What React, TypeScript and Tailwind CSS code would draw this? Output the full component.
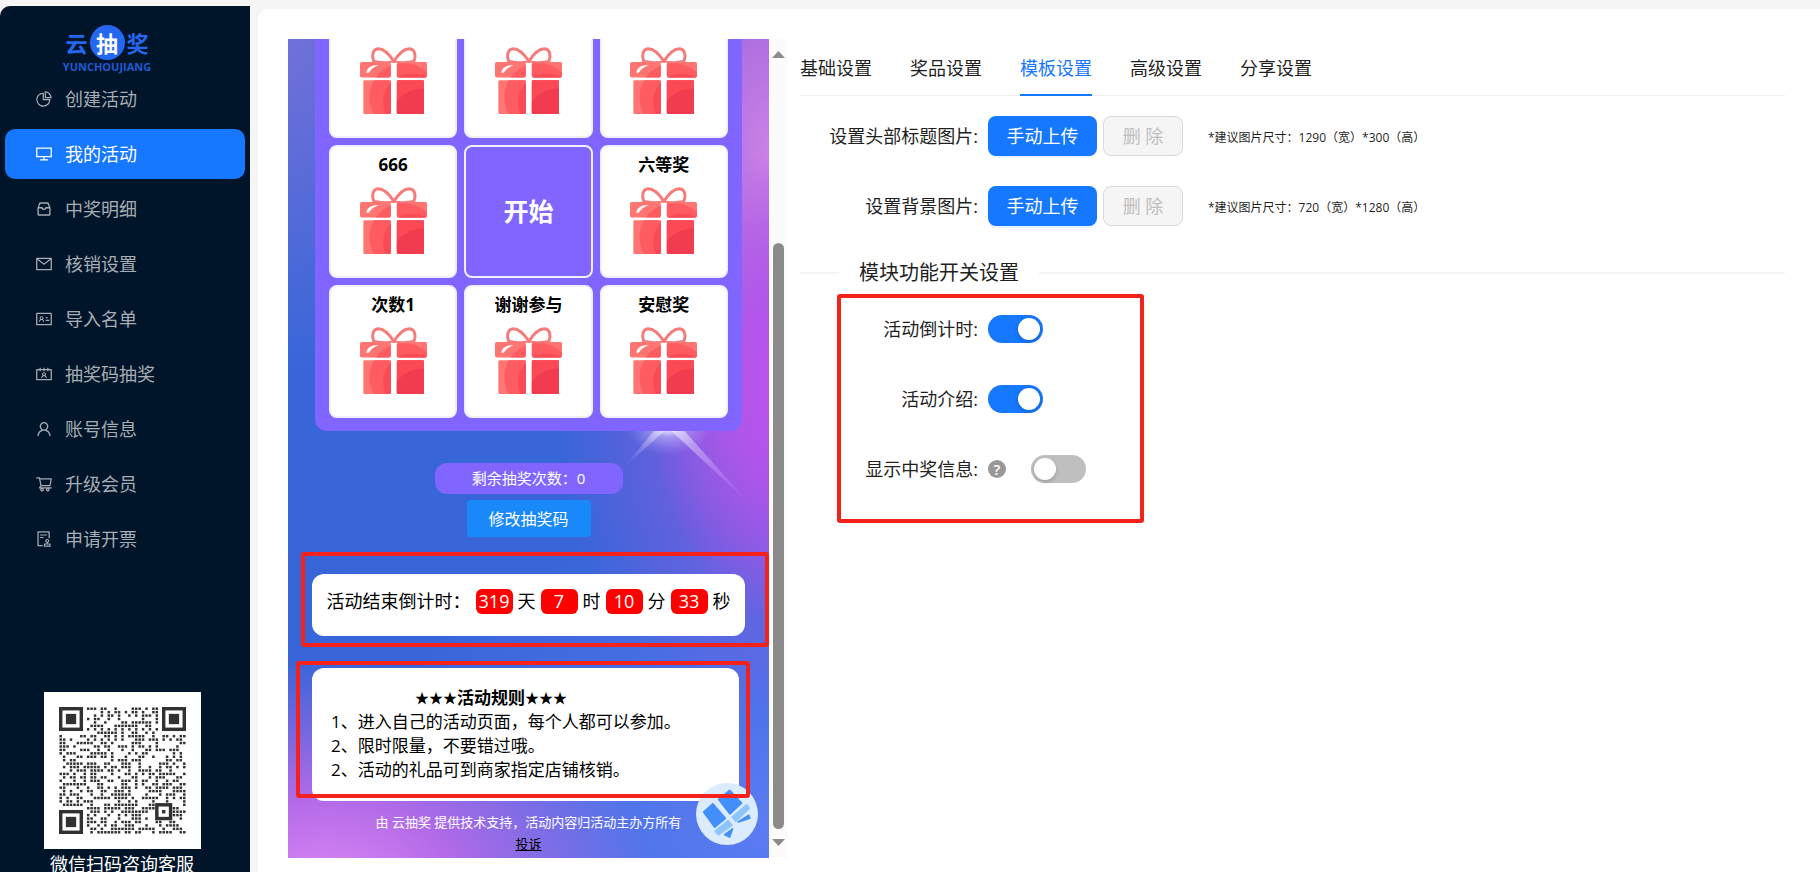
import React, { useState } from "react";
import type { IconType } from "react-icons";
import {
  AiOutlineAudit,
  AiOutlineContacts,
  AiOutlineDesktop,
  AiOutlineIdcard,
  AiOutlineInbox,
  AiOutlineMail,
  AiOutlinePieChart,
  AiOutlineShoppingCart,
  AiOutlineUser,
} from "react-icons/ai";

interface MenuItem {
  label: string;
  icon: IconType;
  active?: boolean;
}

const menuItems: MenuItem[] = [
  { label: "创建活动", icon: AiOutlinePieChart },
  { label: "我的活动", icon: AiOutlineDesktop, active: true },
  { label: "中奖明细", icon: AiOutlineInbox },
  { label: "核销设置", icon: AiOutlineMail },
  { label: "导入名单", icon: AiOutlineIdcard },
  { label: "抽奖码抽奖", icon: AiOutlineContacts },
  { label: "账号信息", icon: AiOutlineUser },
  { label: "升级会员", icon: AiOutlineShoppingCart },
  { label: "申请开票", icon: AiOutlineAudit },
];

const tabs = ["基础设置", "奖品设置", "模板设置", "高级设置", "分享设置"];

// null is the start button in the middle of the grid
const prizes: (string | null)[] = ["", "", "", "666", null, "六等奖", "次数1", "谢谢参与", "安慰奖"];

const countdown = [
  { value: 319, unit: "天" },
  { value: 7, unit: "时" },
  { value: 10, unit: "分" },
  { value: 33, unit: "秒" },
];

const rules = [
  "1、进入自己的活动页面，每个人都可以参加。",
  "2、限时限量，不要错过哦。",
  "2、活动的礼品可到商家指定店铺核销。",
];

const QR_SIZE = 37;

function isQrDot(x: number, y: number) {
  const inFinder =
    (x < 8 && y < 8) || (x > QR_SIZE - 9 && y < 8) || (x < 8 && y > QR_SIZE - 9);
  const inAlign = x >= 28 && x <= 32 && y >= 28 && y <= 32;
  if (inFinder || inAlign) return false;
  if (x === 6 || y === 6) return (x + y) % 2 === 0;
  const n = Math.sin(x * 127.1 + y * 311.7) * 43758.5453;
  return n - Math.floor(n) < 0.5;
}

function QrCode() {
  const dots: React.ReactNode[] = [];
  for (let y = 0; y < QR_SIZE; y++) {
    for (let x = 0; x < QR_SIZE; x++) {
      if (isQrDot(x, y)) {
        dots.push(<rect key={`${x}-${y}`} x={x + 0.14} y={y + 0.14} width="0.72" height="0.72" />);
      }
    }
  }
  const finders = [
    [0, 0],
    [30, 0],
    [0, 30],
  ];
  return (
    <svg viewBox="0 0 37 37" className="size-[127px]" fill="#303133" aria-hidden="true">
      {dots}
      {finders.map(([x, y]) => (
        <g key={`${x}${y}`}>
          <rect x={x + 0.5} y={y + 0.5} width="6" height="6" fill="none" stroke="#303133" />
          <rect x={x + 2} y={y + 2} width="3" height="3" />
        </g>
      ))}
      <rect x="28.5" y="28.5" width="4" height="4" fill="none" stroke="#303133" />
      <rect x="30" y="30" width="1" height="1" />
    </svg>
  );
}

function GiftIcon({ id }: { id: string }) {
  return (
    <svg viewBox="0 0 200 200" className="size-[67px]" aria-hidden="true">
      <defs>
        <clipPath id={id}>
          <rect x="0" y="45" width="92" height="46" rx="5" />
          <rect x="110" y="45" width="90" height="46" rx="5" />
          <rect x="10" y="99" width="82" height="101" rx="4" />
          <rect x="110" y="99" width="81" height="101" rx="4" />
        </clipPath>
      </defs>
      <g clipPath={`url(#${id})`}>
        <rect width="200" height="200" fill="#ff7572" />
        <circle cx="130" cy="150" r="102" fill="#ff5c62" />
        <circle cx="155" cy="165" r="86" fill="#fb4a56" />
        <circle cx="190" cy="225" r="102" fill="#f13b4f" />
        <path d="M110 45h90v25c-12-9-30-20-48-25z" fill="#ff7572" opacity="0.6" />
      </g>
      <path d="M19 77C20 62 36 53 56 54 43 59 33 66 26 77z" fill="#fff" />
      <g fill="none" stroke="#f47c7b" strokeWidth="9" strokeLinecap="round">
        <path d="M101 43C88 22 70 5 54 5 38 6 34 26 41 42" />
        <path d="M41 42C62 46 84 46 101 43" strokeWidth="6" />
        <path d="M101 43C114 22 132 5 148 5 164 6 168 26 161 42" />
        <path d="M161 42C140 46 118 46 101 43" strokeWidth="6" />
      </g>
    </svg>
  );
}

function FloatingGift() {
  return (
    <svg viewBox="0 0 188 188" className="size-[62px]" aria-hidden="true">
      <circle cx="94" cy="94" r="94" fill="#dcecff" />
      <g strokeLinejoin="round" strokeWidth="5">
        <g fill="#438ffa" stroke="#438ffa">
          <path d="M23 88 51 63 89 107 57 134z" />
          <path d="M69 50 102 22 138 61 103 94z" />
          <path d="M87 157 111 139 102 164z" />
          <path d="M128 118 160 98 163 107z" />
        </g>
        <g fill="#8ec5ff" stroke="#8ec5ff">
          <path d="M58 146 97 114 109 128 68 157z" />
          <path d="M110 103 154 66 161 77 121 116z" />
        </g>
      </g>
    </svg>
  );
}

function Logo() {
  return (
    <div className="flex h-[68px] shrink-0 flex-col items-center pt-[19px] pr-9 text-[#2468f2]">
      <div className="flex h-[35px] items-center gap-[2px] text-[22px] leading-8 font-bold">
        <span>云</span>
        <span className="flex size-[35px] items-center justify-center rounded-full bg-[#2468f2] text-white">
          抽
        </span>
        <span>奖</span>
      </div>
      <span className="text-[11px] leading-[14px] font-bold text-[#1f5ad4]">YUNCHOUJIANG</span>
    </div>
  );
}

function Sidebar() {
  return (
    <aside className="flex w-[250px] shrink-0 flex-col overflow-hidden rounded-tl-[10px] bg-[#001529]">
      <Logo />
      <nav aria-label="主菜单" className="px-[5px]">
        <ul className="flex flex-col gap-[5px]">
          {menuItems.map(({ label, icon: Icon, active }) => (
            <li key={label}>
              <a
                href="#"
                className={
                  active
                    ? "flex h-[50px] items-center gap-3 rounded-[10px] bg-[#1677ff] pl-[30px] text-[18px] text-white"
                    : "flex h-[50px] items-center gap-3 rounded-[10px] pl-[30px] text-[18px] text-[#a6adb4] hover:text-white"
                }
              >
                <Icon className="size-[18px]" />
                <span>{label}</span>
              </a>
            </li>
          ))}
        </ul>
      </nav>
      <div className="mt-32 flex shrink-0 flex-col items-center pr-[6px]">
        <div className="flex size-[157px] items-center justify-center bg-white">
          <QrCode />
        </div>
        <p className="mt-[2px] text-[18px] leading-[26px] text-white">微信扫码咨询客服</p>
      </div>
    </aside>
  );
}

function PrizeGrid() {
  return (
    <div className="w-[427px] rounded-[12px] bg-[#8066ff] px-[14px] pt-[14px] pb-[13px]">
      <div className="grid grid-cols-3 gap-[7px]">
        {prizes.map((name, i) =>
          name === null ? (
            <button
              key={i}
              type="button"
              className="h-[133px] rounded-[8px] border-2 border-[#f0efff] text-[25px] font-bold text-white"
            >
              开始
            </button>
          ) : (
            <div
              key={i}
              className="flex h-[133px] flex-col items-center gap-[10px] rounded-[8px] border-2 border-[#f0efff] bg-white pt-[6px]"
            >
              <span className="h-6 text-[17px] leading-6 font-bold text-black">{name}</span>
              <GiftIcon id={`gift-${i}`} />
            </div>
          )
        )}
      </div>
    </div>
  );
}

function PhonePreview() {
  return (
    <div className="relative flex w-[481px] flex-col items-center justify-end overflow-hidden bg-[#3866d8] bg-[radial-gradient(ellipse_330px_230px_at_8%_104%,#dc88f4_0%,#b36ae8_40%,transparent_100%),radial-gradient(ellipse_150px_240px_at_106%_42%,#c452f0_0%,#b355ea_35%,transparent_100%),radial-gradient(ellipse_160px_330px_at_100%_14%,#cb82e6_0%,#b070e0_35%,transparent_100%),radial-gradient(ellipse_230px_290px_at_104%_48%,#9c58e4_0%,transparent_100%),radial-gradient(ellipse_220px_330px_at_0%_0%,#7270d8_0%,transparent_100%),radial-gradient(ellipse_420px_300px_at_100%_96%,#5c7cf2_0%,transparent_100%)]">
      <svg
        viewBox="0 0 240 160"
        className="absolute top-[352px] right-0 h-[160px] w-[240px]"
        aria-hidden="true"
      >
        <defs>
          <radialGradient id="flare">
            <stop offset="0" stopColor="#fff" stopOpacity="0.95" />
            <stop offset="0.3" stopColor="#d9d4ff" stopOpacity="0.5" />
            <stop offset="1" stopColor="#b9a8ff" stopOpacity="0" />
          </radialGradient>
          <linearGradient id="ray" x1="0" y1="0" x2="1" y2="1">
            <stop offset="0" stopColor="#fff" stopOpacity="0.6" />
            <stop offset="1" stopColor="#d0b0ff" stopOpacity="0" />
          </linearGradient>
          <linearGradient id="rayLeft" x1="1" y1="0" x2="0" y2="1">
            <stop offset="0" stopColor="#fff" stopOpacity="0.6" />
            <stop offset="1" stopColor="#d0b0ff" stopOpacity="0" />
          </linearGradient>
        </defs>
        <ellipse cx="139" cy="38" rx="42" ry="26" fill="url(#flare)" />
        <path d="M136 34h14l72 80z" fill="url(#ray)" />
        <path d="M128 36h12L95 76z" fill="url(#rayLeft)" />
      </svg>

      <div className="relative flex w-full flex-col items-center">
        <PrizeGrid />

        <p className="mt-8 flex h-[31px] w-[188px] items-center justify-center rounded-[12px] bg-[#8066ff] text-[15px] text-white">
          剩余抽奖次数：0
        </p>
        <button
          type="button"
          className="mt-[6px] h-[37px] w-[124px] rounded-[4px] bg-[#1989fa] text-[16px] text-white"
        >
          修改抽奖码
        </button>

        <div className="relative mt-[37px] h-[62px] w-[433px] rounded-[12px] bg-white pt-[13px]">
          <div className="flex items-center justify-center gap-[5px] text-[18px] leading-7 text-black">
            <span>活动结束倒计时：</span>
            {countdown.map(({ value, unit }) => (
              <React.Fragment key={unit}>
                <span className="h-[25px] w-[37px] rounded-[6px] bg-[#ff0000] text-center leading-[25px] text-white">
                  {value}
                </span>
                <span>{unit}</span>
              </React.Fragment>
            ))}
          </div>
          <div className="pointer-events-none absolute -top-[22px] -right-[24px] -bottom-[11px] -left-[11px] rounded-[3px] border-4 border-[#f5221b]" />
        </div>

        <div className="relative mt-8 mr-[6px] h-[133px] w-[427px] rounded-[12px] bg-white pt-[18px] pl-[19px] text-[17px] leading-6 text-black">
          <p className="flex pl-[84px] font-bold">
            <span className="text-[14px]">★★★</span>
            活动规则
            <span className="text-[14px]">★★★</span>
          </p>
          {rules.map((rule) => (
            <p key={rule}>{rule}</p>
          ))}
          <button type="button" aria-label="礼品" className="absolute -right-[19px] -bottom-[44px]">
            <FloatingGift />
          </button>
          <div className="pointer-events-none absolute -top-[7px] -right-[11px] bottom-[3px] -left-[16px] rounded-[3px] border-4 border-[#f5221b]" />
        </div>

        <footer className="flex flex-col items-center pt-[10px] pb-[3px] text-[13px] leading-[22px]">
          <p className="text-white">由 云抽奖 提供技术支持，活动内容归活动主办方所有</p>
          <a href="#" className="text-black underline">
            投诉
          </a>
        </footer>
      </div>
    </div>
  );
}

function ScrollRail() {
  return (
    <div className="flex w-[19px] flex-col items-center bg-[#fbfbfb] py-3 pr-[1px]" aria-hidden="true">
      <svg viewBox="0 0 13 7" className="h-[7px] w-[13px]" fill="#8b8b8b">
        <path d="M6.500 0 13 7H0z" />
      </svg>
      <div className="mt-[185px] mb-[10px] w-[11px] flex-1 rounded-full bg-[#8b8b8b]" />
      <svg viewBox="0 0 13 7" className="h-[7px] w-[13px]" fill="#8b8b8b">
        <path d="M0 0h13L6.500 7z" />
      </svg>
    </div>
  );
}

interface UploadRowProps {
  id: string;
  label: string;
  hint: string;
}

function UploadRow({ id, label, hint }: UploadRowProps) {
  return (
    <div className="flex h-10 items-center">
      <label htmlFor={id} className="w-[188px] pr-[10px] text-right">
        {label}:
      </label>
      <button
        id={id}
        type="button"
        className="h-10 w-[109px] rounded-[8px] bg-[#1677ff] text-white shadow-[0_2px_0_rgba(5,145,255,0.1)]"
      >
        手动上传
      </button>
      <button
        type="button"
        disabled
        className="ml-[6px] h-10 w-20 rounded-[8px] border border-[#d9d9d9] bg-[#f5f5f5] text-[#bfbfbf]"
      >
        删 除
      </button>
      <span className="ml-[25px] pt-1 text-[12px]">{hint}</span>
    </div>
  );
}

interface SwitchRowProps {
  id: string;
  label: string;
  defaultOn?: boolean;
  help?: boolean;
}

function SwitchRow({ id, label, defaultOn = false, help = false }: SwitchRowProps) {
  const [on, setOn] = useState(defaultOn);
  return (
    <div className="flex h-10 items-center">
      <label htmlFor={id} className="w-[188px] pr-[10px] text-right">
        {label}:
      </label>
      {help && (
        <span className="mr-[25px] flex size-[18px] items-center justify-center rounded-full bg-[#999999] text-[15px] leading-[18px] font-semibold text-white">
          ?
        </span>
      )}
      <input
        id={id}
        type="checkbox"
        role="switch"
        checked={on}
        onChange={(e) => setOn(e.target.checked)}
        className="flex h-7 w-[55px] cursor-pointer appearance-none items-center rounded-full bg-[#bfbfbf] px-[3px] before:size-[22px] before:rounded-full before:bg-white before:shadow-[0_2px_4px_rgba(0,35,11,0.2)] checked:justify-end checked:bg-[#1677ff]"
      />
    </div>
  );
}

function SettingsPanel() {
  const [activeTab, setActiveTab] = useState("模板设置");
  return (
    <section className="min-w-0 flex-1 text-[18px] text-[#1f1f1f]">
      <div role="tablist" className="flex h-[57px] gap-[38px] border-b border-[#eeeeee] pt-[15px]">
        {tabs.map((tab) => (
          <button
            key={tab}
            type="button"
            role="tab"
            aria-selected={tab === activeTab}
            onClick={() => setActiveTab(tab)}
            className={
              tab === activeTab
                ? "-mb-px border-b-2 border-[#1677ff] pb-3 leading-7 text-[#1677ff]"
                : "-mb-px border-b-2 border-transparent pb-3 leading-7"
            }
          >
            {tab}
          </button>
        ))}
      </div>

      <div className="mt-5 flex flex-col gap-[30px]">
        <UploadRow id="title-image" label="设置头部标题图片" hint="*建议图片尺寸：1290（宽）*300（高）" />
        <UploadRow id="bg-image" label="设置背景图片" hint="*建议图片尺寸：720（宽）*1280（高）" />
      </div>

      <div className="mt-8 flex items-center gap-5">
        <span className="h-[2px] w-[39px] bg-[#f5f5f5]" />
        <h2 className="text-[20px] leading-[30px]">模块功能开关设置</h2>
        <span className="h-[2px] flex-1 bg-[#f5f5f5]" />
      </div>

      <div className="relative mt-[21px] flex flex-col gap-[30px]">
        <SwitchRow id="countdown" label="活动倒计时" defaultOn />
        <SwitchRow id="intro" label="活动介绍" defaultOn />
        <SwitchRow id="winners" label="显示中奖信息" help />
        <div className="pointer-events-none absolute -top-[15px] -bottom-[34px] left-[37px] w-[307px] rounded-[3px] border-4 border-[#f5221b]" />
      </div>
    </section>
  );
}

export default function App() {
  return (
    <div className="flex h-screen overflow-hidden bg-[#f5f5f5] pt-[6px] font-['Open_Sans','Noto_Sans_CJK_SC',sans-serif]">
      <Sidebar />
      <main className="mt-[3px] ml-2 flex min-w-0 flex-1 rounded-tl-[10px] bg-white pt-[30px] pr-[35px] pb-[14px] pl-[30px]">
        <PhonePreview />
        <ScrollRail />
        <div className="ml-3 flex min-w-0 flex-1">
          <SettingsPanel />
        </div>
      </main>
    </div>
  );
}
